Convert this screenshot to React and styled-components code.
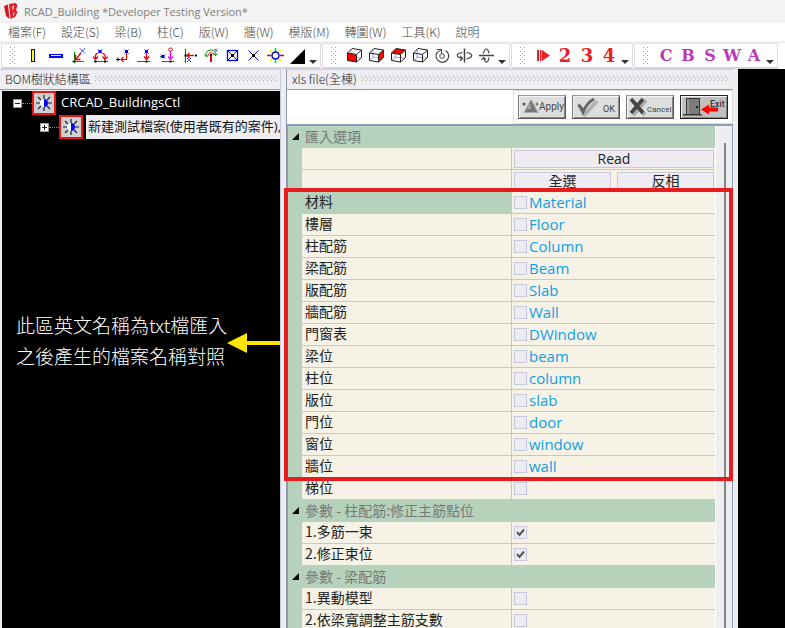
import React from "react";
import styled, { createGlobalStyle, css } from "styled-components";

const Global = createGlobalStyle`
  * { box-sizing: border-box; }
  body { margin: 0; background: #f3f3f3; }
  button, input { font: inherit; color: inherit; }
`;

const ui = `"Open Sans", "Noto Sans CJK TC", sans-serif`;
const cjk = `"Noto Sans CJK TC", sans-serif`;

const dots = (color) => css`
  background:
    conic-gradient(at 1px 1px, transparent 75%, ${color} 0) 0 0 / 4px 4px,
    conic-gradient(at 1px 1px, transparent 75%, ${color} 0) 2px 2px / 4px 4px;
`;

const Window = styled.div`
  display: flex;
  flex-direction: column;
  height: 100vh;
  overflow: hidden;
  font-family: ${ui};
  font-size: 12px;
  background: #eeeef2;
`;

const TitleBar = styled.header`
  display: flex;
  align-items: center;
  gap: 6px;
  height: 23px;
  padding-left: 4px;
  background: #f3f3f3;
`;

const Title = styled.h1`
  margin: 0;
  font-size: 11px;
  font-weight: 400;
  color: #808080;
`;

const MenuBar = styled.nav`
  display: flex;
  gap: 15px;
  height: 18px;
  padding-left: 8px;
  background: #fff;
`;

const MenuItem = styled.button`
  padding: 0;
  border: 0;
  background: none;
  line-height: 18px;
  font-family: ${cjk};
  font-weight: 300;
  color: #444;
  white-space: nowrap;
`;

const ToolbarRow = styled.div`
  display: flex;
  flex: none;
  gap: 1px;
  height: 28px;
  padding: 2px 0 0 1px;
  background: linear-gradient(#f0f0f0 2px, #fff 2px);
`;

const Toolbar = styled.div`
  display: flex;
  align-items: center;
  padding-left: 8px;
  border: 1px solid #dedee2;
  border-bottom: 2px solid #d2d2dc;
  background: #fff;
`;

const Grip = styled.span`
  width: 6px;
  height: 17px;
  margin-right: 6px;
  ${dots("#9a9aae")}
`;

const Tool = styled.button`
  display: flex;
  align-items: center;
  justify-content: center;
  width: 22px;
  height: 22px;
  padding: 0;
  border: 0;
  background: none;
  font-family: "DejaVu Serif", serif;
  font-weight: 700;
  font-size: ${(p) => (p.$digit ? "18px" : "16px")};
  line-height: 22px;
  color: ${(p) => (p.$digit ? "#e8202a" : "#b83ab8")};
`;

const More = styled.button`
  display: flex;
  align-items: end;
  width: 12px;
  height: 22px;
  padding: 0 0 3px 1px;
  border: 0;
  background: none;
`;

const Body = styled.main`
  display: flex;
  flex: 1;
  min-height: 0;
`;

const Sidebar = styled.aside`
  display: flex;
  flex-direction: column;
  width: 281px;
  border-right: 1px solid #c8c8dc;
`;

const PanelHeader = styled.div`
  display: flex;
  flex: none;
  align-items: center;
  gap: 4px;
  height: 21px;
  padding: 0 4px 2px 5px;
  border-top: 1px solid #d0d0dc;
  border-bottom: 1px solid #999;
  background: #eeeef2;
  color: #222;
`;

const PanelTitle = styled.h2`
  margin: 0;
  font-family: ${cjk};
  font-size: 12px;
  line-height: 17px;
  font-weight: 300;
  white-space: nowrap;
`;

const HeaderDots = styled.span`
  flex: 1;
  height: 5px;
  ${dots("#a4a4ac")}
`;

const TreeView = styled.div`
  display: flex;
  flex: 1;
  flex-direction: column;
  margin: 1px 0 0 2px;
  background: #000;
  overflow: hidden;
`;

const TreeRow = styled.div`
  display: flex;
  align-items: center;
  height: 24px;
  padding-left: ${(p) => (p.$level ? "38px" : "11px")};
  color: #fff;
`;

const Toggle = styled.button`
  display: flex;
  width: 9px;
  height: 9px;
  padding: 0;
  border: 0;
`;

const Connector = styled.span`
  width: 10px;
  border-top: 1px dotted #888;
`;

const NodeIcon = styled.span`
  display: flex;
  flex: none;
  width: 24px;
  height: 24px;
  border: 2px solid #ee1414;
  background: #d0d0d0;
`;

const NodeLabel = styled.span`
  flex: 1;
  margin-left: 3px;
  padding: 0 0 2px 2px;
  overflow: hidden;
  white-space: nowrap;
  font-size: 13px;
  line-height: 22px;
  background: ${(p) => (p.$active ? "#eeeef2" : "none")};
  color: ${(p) => (p.$active ? "#111" : "#fff")};
`;

const Note = styled.div`
  display: flex;
  align-items: end;
  justify-content: space-between;
  margin-top: 170px;
  padding-left: 14px;
`;

const NoteText = styled.p`
  margin: 0;
  font-family: ${cjk};
  font-weight: 300;
  font-size: 19px;
  line-height: 31px;
  white-space: nowrap;
  color: #fff;
`;

const NoteArrow = styled.svg`
  flex: none;
  margin-bottom: 18px;
`;

const PropertyPanel = styled.section`
  display: flex;
  flex: 1;
  flex-direction: column;
  min-width: 0;
  margin: 0 5px;
  border-left: 1px solid #8f93a8;
`;

const Actions = styled.div`
  display: flex;
  flex: none;
  justify-content: end;
  height: 34px;
  background: #fff;
`;

const ActionGroup = styled.div`
  display: flex;
  align-items: center;
  gap: 6px;
  padding: 0 4px;
  border: 1px solid #dedee2;
`;

const ActionButton = styled.button`
  width: 48px;
  height: 24px;
  padding: 0;
  border: 1px solid #555;
  border-color: ${(p) => (p.$dark ? "#222" : "#999 #555 #555 #777")};
  box-shadow: inset 1px 1px #f4f4f4, inset -1px -1px #888;
  background: ${(p) => (p.$dark ? "#c0c0c0" : "#dedede")};
  svg { display: block; }
`;

const ButtonText = styled.text`
  font-family: Roboto, sans-serif;
  font-size: ${(p) => p.$size};
  fill: ${(p) => (p.$dark ? "#111" : "#444")};
`;

const GridFrame = styled.div`
  display: flex;
  flex: 1;
  min-height: 0;
  border: 1px solid #8f9dbb;
  border-top-width: 2px;
  border-bottom: 0;
`;

const PropertyGrid = styled.div`
  flex: 1;
  min-width: 0;
`;

const ScrollTrack = styled.div`
  width: 17px;
  padding: 17px 0 0 8px;
  border-left: 1px solid #fff;
  background: #eeeef0;
`;

const ScrollThumb = styled.div`
  width: 2px;
  height: 100%;
  background: #858585;
`;

const GroupRow = styled.button`
  display: flex;
  align-items: center;
  gap: 6px;
  width: 100%;
  height: 22px;
  padding: 0 0 2px 4px;
  border: 0;
  background: #b6d1bc;
  font-family: ${cjk};
  font-size: 14px;
  line-height: 20px;
  color: #757a76;
`;

const Row = styled.div`
  display: grid;
  grid-template-columns: 14px 210px 1fr;
  height: 22px;
  background: #b6d1bc;
`;

const NameCell = styled.label`
  grid-column: 2;
  margin: 0 1px 1px 0;
  padding-left: 3px;
  font-family: ${cjk};
  font-size: 14px;
  line-height: 18px;
  color: #222;
  background: ${(p) => (p.$selected ? "#b6d1bc" : "#f7f2e6")};
`;

const ValueCell = styled.div`
  display: flex;
  align-items: center;
  gap: ${(p) => (p.$wide ? "6px" : "2px")};
  min-width: 0;
  margin-bottom: 1px;
  padding: ${(p) => (p.$wide ? "2px 1px 1px 2px" : "0 2px")};
  background: #f7f2e6;
`;

const FlatButton = styled.button`
  flex: 1;
  height: 18px;
  padding: 0;
  border: 1px solid #c8c8dc;
  background: #eeecf2;
  font-family: ${ui};
  font-size: 14px;
  line-height: 16px;
  color: #222;
`;

const Check = styled.input`
  appearance: none;
  flex: none;
  width: 13px;
  height: 13px;
  margin: 0;
  border: 1px solid #c8c8dc;
  background: #eeecf2;
  &:checked {
    background: #eeecf2
      url("data:image/svg+xml,%3Csvg xmlns='http://www.w3.org/2000/svg' viewBox='0 0 11 11'%3E%3Cpath d='M2 5l2.500 3L9 2.500' fill='none' stroke='%23555' stroke-width='2'/%3E%3C/svg%3E");
  }
`;

const FileName = styled.label`
  padding-bottom: 2px;
  font-size: 15px;
  font-weight: 500;
  line-height: 18px;
  color: #109fe6;
`;

const Highlighted = styled.div`
  position: relative;
  &::after {
    content: "";
    position: absolute;
    inset: -4px -18px -3px -4px;
    border: 4px solid #e81c1c;
    pointer-events: none;
  }
`;

const Workspace = styled.div`
  width: 47px;
  background: #000;
`;

const Pic = ({ children, crisp }) => (
  <svg width="22" height="22" viewBox="0 0 22 22" fill="none" shapeRendering={crisp ? "crispEdges" : "auto"} aria-hidden="true">
    {children}
  </svg>
);

const B = "#00f", R = "#e00", G = "#008a00";
const Cross = ({ x, y, r = 2 }) => (
  <path d={`M${x - r} ${y - r}l${2 * r} ${2 * r}M${x + r} ${y - r}l${-2 * r} ${2 * r}`} stroke={B} strokeWidth="1" strokeDasharray="1.500 .5" />
);
const Sq = ({ x, y }) => (
  <g><rect x={x - 1.5} y={y - 1.5} width="3" height="3" fill={B} /><path d={`M${x - 2} ${y - 2}l4 4m0-4l-4 4`} stroke={B} /></g>
);
const Dot = ({ x, y }) => <rect x={x - 1} y={y - 1} width="2" height="2" fill="#000" />;

const editTools = [
  ["柱", <Pic crisp><rect x="9" y="4" width="4" height="13" fill="#00c" /><rect x="10" y="5" width="2" height="11" fill="#ff0" /></Pic>],
  ["梁", <Pic crisp><rect x="5" y="9" width="14" height="4" fill={B} /><rect x="7" y="10" width="10" height="1" fill="#ff0" /></Pic>],
  ["原點", <Pic><path d="M8.500 7v11M6 16.500h12" stroke={G} /><path d="M15 8l-5 6M9.500 9.500v5h5" stroke={R} strokeWidth="1.300" /><Cross x={16.5} y={6} r={2.5} /><Dot x={8.5} y={16.5} /></Pic>],
  ["兩點", <Pic><path d="M6 16.500h14" stroke={G} /><path d="M9.500 8L7.500 10v4M14.500 8l2.500 2v4M5 11.500l2.500 3 2.500-3M14.500 11.500l2.500 3 2.500-3" stroke={R} strokeWidth="1.200" /><Sq x={12} y={6.5} /><Dot x={7.5} y={16.5} /><Dot x={17} y={16.5} /></Pic>],
  ["左移", <Pic><path d="M16.500 8v6.500h-5M13.500 12L11 14.500l2.500 2.500" stroke={R} strokeWidth="1.200" /><Sq x={16.5} y={6.5} /><path d="M6 14.500h4M8 12.500v4" stroke="#000" /></Pic>],
  ["下移", <Pic><path d="M5 16.500h13" stroke={G} /><path d="M14.500 8v7M12 11.500l2.500 3 2.500-3" stroke={R} strokeWidth="1.200" /><Sq x={14.5} y={6.5} /><Dot x={14.5} y={16.5} /></Pic>],
  ["投影", <Pic><path d="M8 16.500h12M6 11.500h3" stroke={G} /><path d="M16.500 6v9M14 11.500l2.500 3 2.500-3" stroke="#f0f" strokeWidth="1.200" /><ellipse cx="16.500" cy="4.500" rx="2" ry="1.500" stroke={R} /><Sq x={9} y={11.5} /><Dot x={16.5} y={16.5} /></Pic>],
  ["對齊", <Pic><path d="M9.500 4v14" stroke={G} strokeWidth="1.200" /><path d="M11 10.500h7M13.500 8L11 10.500l2.500 2.500" stroke={R} strokeWidth="1.300" /><Cross x={13} y={15} r={2} /><Dot x={9.5} y={10.5} /><Dot x={20} y={10.5} /></Pic>],
  ["旋轉", <Pic><path d="M8.500 11.500C7 7 10 5 13 5c3 0 5 2.500 4.500 5.500M6.500 9.500l2 2.500 2-2M15.500 8.500l2 2 2-2" stroke={G} /><path d="M10 10c1-3 5-3 6 0" stroke={R} /><rect x="12" y="10" width="2" height="7" fill={R} /><Cross x={18} y={5.5} r={1.5} /><Dot x={13} y={10} /></Pic>],
  ["方格", <Pic><rect x="7.500" y="5.500" width="10" height="10" stroke={B} strokeWidth="1.300" /><path d="M8 6l9 9M17 6l-9 9" stroke={B} /><rect x="11" y="9" width="3" height="3" fill="#000" /></Pic>],
  ["交點", <Pic><path d="M6.500 5.500l10 10M16.500 5.500l-10 10" stroke={B} /><rect x="10" y="9" width="3" height="3" fill="#000" /></Pic>],
  ["亮度", <Pic><path d="M11.500 3v15" stroke="#0d2" strokeWidth="1.500" strokeDasharray="4 7" /><path d="M3 10.500h17" stroke={R} strokeWidth="1.500" strokeDasharray="4 9" /><path d="M6 5l11 11M17 5L6 16" stroke="#ee0" strokeWidth="1.300" /><circle cx="11.500" cy="10.500" r="3.500" fill="#fff" stroke={B} strokeWidth="1.500" /></Pic>],
  ["三角", <Pic><path d="M4 19L19 4v15z" fill="#000" /></Pic>],
];

const Cube = ({ face }) => (
  <Pic>
    <path d="M8 4v8l-3 4M8 12l10 1" stroke="#88c" strokeWidth=".8" />
    {face === "front" && <path d="M4.500 8l9 1.500v7.500l-9-1.500z" fill="#f00" />}
    {face === "right" && <path d="M13.500 9.500l5-4.500v7.500l-5 4.500z" fill="#f00" />}
    {face === "top" && <path d="M4.500 8l4.500-4.500 9.500 1.500-5 4.500z" fill="#f00" />}
    <path d="M4.500 8l9 1.500v7.500l-9-1.500zM4.500 8L9 3.500l9.500 1.500-5 4.500M18.500 5v7.500l-5 4.500" stroke="#222" />
  </Pic>
);

const viewTools = [
  ["前視", <Cube face="front" />],
  ["右視", <Cube face="right" />],
  ["上視", <Cube face="top" />],
  ["立體", <Cube />],
  ["環繞", <Pic><path d="M6.500 7a6.300 6.300 0 1 0 8-1.500" stroke="#444" strokeWidth="1.200" /><path d="M6 4.500h4.500v4" stroke="#444" /><path d="M6.500 7.500l4-3" stroke="#444" /><circle cx="11" cy="11" r="2.300" stroke="#444" /></Pic>],
  ["水平旋轉", <Pic><path d="M11.500 3.500v14" stroke="#444" strokeWidth="1.500" /><path d="M9.500 13.500C2.500 12.500 2.500 8.500 9.500 7.500M13.500 7.500c7 1 7 5 0 6.500M7 11l2.500 2.500L7 16" stroke="#444" strokeWidth="1.200" /></Pic>],
  ["垂直旋轉", <Pic><path d="M4 10.500h15" stroke="#444" strokeWidth="1.500" /><path d="M8.500 8.500C9.500 2.500 13 2.500 14 8.500M14 12.500c-1 6-4 6-5 1M6.500 15l2-2.500 2.500 2" stroke="#444" strokeWidth="1.200" /></Pic>],
];

const stepTools = [
  ["執行", <Pic><path d="M5 5h2v11H5zM8 5h1.500v11H8zM10 5l8 5.500-8 5.500z" fill="#e8202a" /></Pic>],
  ["2", "2"], ["3", "3"], ["4", "4"],
];

const letterTools = ["C", "B", "S", "W", "A"].map((c) => [c, c]);

const ToolGroup = ({ items, digit, label }) => (
  <Toolbar role="toolbar" aria-label={label}>
    <Grip />
    {items.map(([name, art]) => (
      <Tool key={name} aria-label={name} $digit={digit}>{art}</Tool>
    ))}
    <More aria-label="更多">
      <svg width="8" height="4" viewBox="0 0 8 4"><path d="M0 0h8L4 4z" fill="#333" /></svg>
    </More>
  </Toolbar>
);

const Sun = () => (
  <svg width="20" height="20" viewBox="0 0 20 20" aria-hidden="true">
    <path d="M10 2v4M10 14v4M2 10h4M14 10h4M4 4l3 3M13 13l3 3M16 4l-3 3M7 13l-3 3" stroke="#124" strokeWidth="1.200" />
    <circle cx="10" cy="10" r="4" fill="#fff" />
    <path d="M10 6a4 4 0 0 1 0 8z" fill="#00e" />
  </svg>
);

const ToggleBox = ({ open }) => (
  <Toggle aria-label={open ? "收合" : "展開"}>
    <svg width="9" height="9" viewBox="0 0 9 9" shapeRendering="crispEdges">
      <rect width="9" height="9" fill="#999" /><rect x="1" y="1" width="7" height="7" fill="#fff" />
      <path d={open ? "M2 4h5v1H2z" : "M2 4h5v1H2zM4 2h1v5H4z"} fill="#114" />
    </svg>
  </Toggle>
);

const Apply = () => (
  <svg width="46" height="22" viewBox="0 0 46 22">
    <path d="M4 17l8-14 8 14z" fill="#aaa" /><path d="M6 16l6-12 6 12z" fill="#777" /><path d="M8 13l3-7 1 7z" fill="#a8a8a8" />
    <circle cx="5" cy="8" r="1.500" fill="#555" /><circle cx="18" cy="8" r="1.500" fill="#777" />
    <ButtonText x="20" y="14" $size="10px">Apply</ButtonText>
  </svg>
);
const Ok = () => (
  <svg width="46" height="22" viewBox="0 0 46 22">
    <path d="M7 11l5 7L24 5" fill="none" stroke="#b0b0b0" strokeWidth="4" /><path d="M5 9c3 1 4 4 5 7C13 9 17 5 21 3" fill="none" stroke="#666" strokeWidth="3" />
    <ButtonText x="30" y="16" $size="9px">OK</ButtonText>
  </svg>
);
const Cancel = () => (
  <svg width="46" height="22" viewBox="0 0 46 22">
    <path d="M6 5l12 14M19 4L6 19" stroke="#aaa" strokeWidth="4" /><path d="M4 3l12 14M16 3L4 17" stroke="#444" strokeWidth="3.500" />
    <ButtonText x="20" y="16" $size="8px">Cancel</ButtonText>
  </svg>
);
const Exit = () => (
  <svg width="46" height="22" viewBox="0 0 46 22">
    <path d="M2 18h18l2 1.500H2z" fill="#333" /><rect x="5.500" y="2.500" width="13" height="16" fill="#7c7c7c" stroke="#333" /><path d="M6 3h2v15H6z" fill="#999" /><circle cx="16" cy="11" r="1" fill="#000" />
    <ButtonText x="29" y="11" $size="9px" $dark>Exit</ButtonText>
    <path d="M20 13.500l8-5v3h9v4h-9v3z" fill="#f00" />
  </svg>
);

const menus = ["檔案(F)", "設定(S)", "梁(B)", "柱(C)", "版(W)", "牆(W)", "模版(M)", "轉圖(W)", "工具(K)", "說明"];

const imports = [
  ["材料", "Material"], ["樓層", "Floor"], ["柱配筋", "Column"], ["梁配筋", "Beam"], ["版配筋", "Slab"],
  ["牆配筋", "Wall"], ["門窗表", "DWindow"], ["梁位", "beam"], ["柱位", "column"], ["版位", "slab"],
  ["門位", "door"], ["窗位", "window"], ["牆位", "wall"],
];

const Group = ({ children }) => (
  <GroupRow>
    <svg width="7" height="7" viewBox="0 0 7 7"><path d="M0 7L7 0v7z" fill="#000" /></svg>
    {children}
  </GroupRow>
);

const Option = ({ name, file, checked, selected }) => (
  <Row>
    <NameCell htmlFor={name} $selected={selected}>{name}</NameCell>
    <ValueCell>
      <Check type="checkbox" id={name} defaultChecked={checked} />
      {file && <FileName htmlFor={name}>{file}</FileName>}
    </ValueCell>
  </Row>
);

export default function App() {
  return (
    <Window>
      <Global />
      <TitleBar>
        <svg width="14" height="17" viewBox="0 0 14 17" aria-hidden="true">
          <path d="M0 3l4-1.500 1.500 14.500L2 13z" fill="#d01820" />
          <path d="M5 1l6.500-1L13.500 2l-1.500 5 1.500 2-2 4.500-5 2.500z" fill="#e0202a" />
          <path d="M8.500 3l1.500-.5-.5 4-1 .5zM9.500 9.500l1-.5-.5 3.500-1 .5z" fill="#f3f3f3" />
        </svg>
        <Title>RCAD_Building *Developer Testing Version*</Title>
      </TitleBar>
      <MenuBar>{menus.map((m) => <MenuItem key={m}>{m}</MenuItem>)}</MenuBar>
      <ToolbarRow>
        <ToolGroup items={editTools} label="編輯" />
        <ToolGroup items={viewTools} label="視圖" />
        <ToolGroup items={stepTools} label="步驟" digit />
        <ToolGroup items={letterTools} label="構件" />
      </ToolbarRow>
      <Body>
        <Sidebar>
          <PanelHeader><PanelTitle>BOM樹狀結構區</PanelTitle><HeaderDots /></PanelHeader>
          <TreeView>
            <TreeRow>
              <ToggleBox open /><Connector /><NodeIcon><Sun /></NodeIcon>
              <NodeLabel>CRCAD_BuildingsCtl</NodeLabel>
            </TreeRow>
            <TreeRow $level>
              <ToggleBox /><Connector /><NodeIcon><Sun /></NodeIcon>
              <NodeLabel $active>新建測試檔案(使用者既有的案件),</NodeLabel>
            </TreeRow>
            <Note>
              <NoteText>此區英文名稱為txt檔匯入<br />之後產生的檔案名稱對照</NoteText>
              <NoteArrow width="53" height="20" viewBox="0 0 53 20" aria-hidden="true"><path d="M0 10L20 0v8h33v4H20v8z" fill="#ffe600" /></NoteArrow>
            </Note>
          </TreeView>
        </Sidebar>
        <PropertyPanel>
          <PanelHeader><PanelTitle>xls file(全棟)</PanelTitle><HeaderDots /></PanelHeader>
          <Actions>
            <ActionGroup>
              <ActionButton aria-label="Apply"><Apply /></ActionButton>
              <ActionButton aria-label="OK"><Ok /></ActionButton>
              <ActionButton aria-label="Cancel"><Cancel /></ActionButton>
              <ActionButton aria-label="Exit" $dark><Exit /></ActionButton>
            </ActionGroup>
          </Actions>
          <GridFrame>
            <PropertyGrid>
              <Group>匯入選項</Group>
              <Row><NameCell as="span" /><ValueCell $wide><FlatButton>Read</FlatButton></ValueCell></Row>
              <Row><NameCell as="span" /><ValueCell $wide><FlatButton>全選</FlatButton><FlatButton>反相</FlatButton></ValueCell></Row>
              <Highlighted>
                {imports.map(([name, file], i) => <Option key={name} name={name} file={file} selected={i === 0} />)}
              </Highlighted>
              <Option name="梯位" />
              <Group>參數 - 柱配筋:修正主筋點位</Group>
              <Option name="1.多筋一束" checked />
              <Option name="2.修正束位" checked />
              <Group>參數 - 梁配筋</Group>
              <Option name="1.異動模型" />
              <Option name="2.依梁寬調整主筋支數" />
            </PropertyGrid>
            <ScrollTrack><ScrollThumb /></ScrollTrack>
          </GridFrame>
        </PropertyPanel>
        <Workspace />
      </Body>
    </Window>
  );
}
